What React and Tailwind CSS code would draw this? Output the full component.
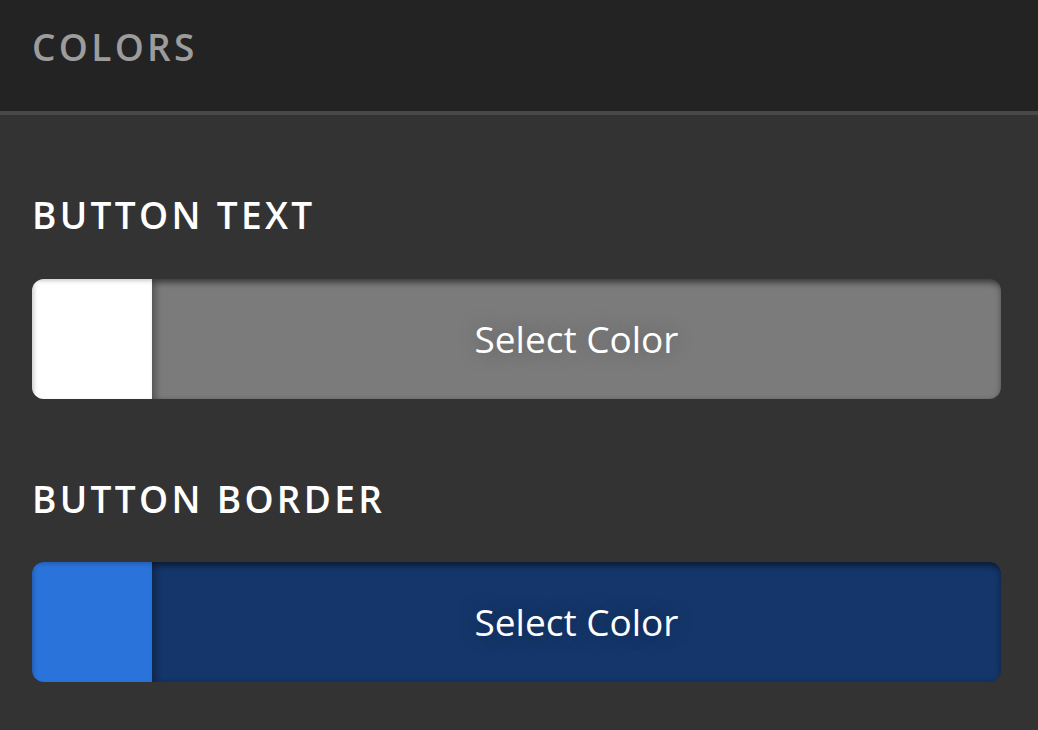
const font = { fontFamily: '"Open Sans", "Noto Sans", sans-serif' };

function ColorPicker({ label, swatch, fill }) {
  return (
    <div>
      <h2 className="text-[37px] leading-[1.5] font-semibold tracking-[0.09em] text-white mb-9">{label}</h2>
      <button
        className={`flex w-full h-[120px] rounded-[12px] overflow-hidden ${fill} shadow-[inset_0_3px_6px_rgba(0,0,0,0.35)]`}
      >
        <span className={`w-[120px] h-full shrink-0 ${swatch} shadow-[inset_2px_2px_4px_rgba(0,0,0,0.2)]`} />
        <span className="flex-1 h-full flex items-center justify-center shadow-[inset_4px_3px_6px_rgba(0,0,0,0.3)]">
          <span className="text-[37px] text-white [text-shadow:0_0_22px_rgba(0,0,0,0.3)]">Select Color</span>
        </span>
      </button>
    </div>
  );
}

export default function App() {
  return (
    <div className="w-[1038px] h-[730px] bg-[#333333] overflow-hidden" style={font}>
      <header className="h-[115px] bg-[#232323] px-8 pt-[19px] border-b-4 border-[#484848]">
        <h1 className="text-[37px] leading-[1.5] font-semibold tracking-[0.09em] text-[#9c9c9c]">COLORS</h1>
      </header>
      <main className="px-8 pt-[72px] pr-[37px] flex flex-col gap-[72px]">
        <ColorPicker label="BUTTON TEXT" swatch="bg-white" fill="bg-[#7b7b7b]" />
        <ColorPicker label="BUTTON BORDER" swatch="bg-[#2a73db]" fill="bg-[#15366a]" />
      </main>
    </div>
  );
}
